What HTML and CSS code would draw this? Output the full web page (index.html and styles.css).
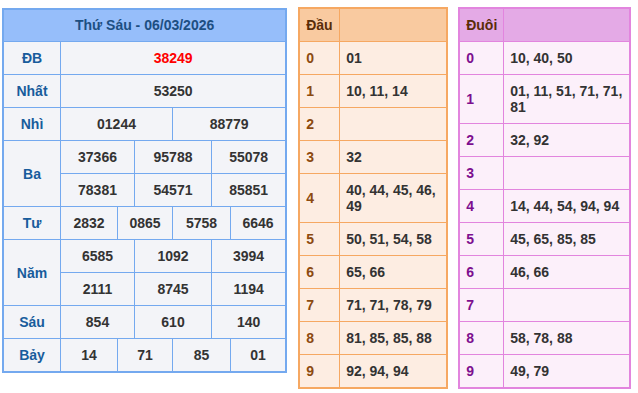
FILE: index.html
```html
<!DOCTYPE html>
<html lang="vi">
<head>
<meta charset="utf-8">
<title>Kết quả xổ số</title>
<link rel="stylesheet" href="styles.css">
</head>
<body>
<div class="wrap">
  <table class="kq">
    <colgroup>
      <col class="c-label">
      <col class="w19"><col class="w19"><col class="w19"><col class="w17">
      <col class="w19"><col class="w19"><col class="w19"><col class="w20">
      <col class="w19"><col class="w18"><col class="w18"><col class="w18">
    </colgroup>
    <thead>
      <tr><th colspan="13" class="title">Thứ Sáu - 06/03/2026</th></tr>
    </thead>
    <tbody>
      <tr><td class="lbl">ĐB</td><td colspan="12" class="db">38249</td></tr>
      <tr><td class="lbl">Nhất</td><td colspan="12">53250</td></tr>
      <tr><td class="lbl">Nhì</td><td colspan="6">01244</td><td colspan="6">88779</td></tr>
      <tr><td class="lbl" rowspan="2">Ba</td><td colspan="4">37366</td><td colspan="4">95788</td><td colspan="4">55078</td></tr>
      <tr><td colspan="4">78381</td><td colspan="4">54571</td><td colspan="4">85851</td></tr>
      <tr><td class="lbl">Tư</td><td colspan="3">2832</td><td colspan="3">0865</td><td colspan="3">5758</td><td colspan="3">6646</td></tr>
      <tr><td class="lbl" rowspan="2">Năm</td><td colspan="4">6585</td><td colspan="4">1092</td><td colspan="4">3994</td></tr>
      <tr><td colspan="4">2111</td><td colspan="4">8745</td><td colspan="4">1194</td></tr>
      <tr><td class="lbl">Sáu</td><td colspan="4">854</td><td colspan="4">610</td><td colspan="4">140</td></tr>
      <tr class="last"><td class="lbl">Bảy</td><td colspan="3">14</td><td colspan="3">71</td><td colspan="3">85</td><td colspan="3">01</td></tr>
    </tbody>
  </table>

  <table class="lt dau">
    <colgroup><col class="c-k1"><col></colgroup>
    <thead><tr><th>Đầu</th><th></th></tr></thead>
    <tbody>
      <tr><td class="k">0</td><td>01</td></tr>
      <tr><td class="k">1</td><td>10, 11, 14</td></tr>
      <tr><td class="k">2</td><td></td></tr>
      <tr><td class="k">3</td><td>32</td></tr>
      <tr><td class="k">4</td><td>40, 44, 45, 46, 49</td></tr>
      <tr><td class="k">5</td><td>50, 51, 54, 58</td></tr>
      <tr><td class="k">6</td><td>65, 66</td></tr>
      <tr><td class="k">7</td><td>71, 71, 78, 79</td></tr>
      <tr><td class="k">8</td><td>81, 85, 85, 88</td></tr>
      <tr class="last"><td class="k">9</td><td>92, 94, 94</td></tr>
    </tbody>
  </table>

  <table class="lt duoi">
    <colgroup><col class="c-k2"><col></colgroup>
    <thead><tr><th>Đuôi</th><th></th></tr></thead>
    <tbody>
      <tr><td class="k">0</td><td>10, 40, 50</td></tr>
      <tr><td class="k">1</td><td>01, 11, 51, 71, 71, 81</td></tr>
      <tr><td class="k">2</td><td>32, 92</td></tr>
      <tr><td class="k">3</td><td></td></tr>
      <tr><td class="k">4</td><td>14, 44, 54, 94, 94</td></tr>
      <tr><td class="k">5</td><td>45, 65, 85, 85</td></tr>
      <tr><td class="k">6</td><td>46, 66</td></tr>
      <tr><td class="k">7</td><td></td></tr>
      <tr><td class="k">8</td><td>58, 78, 88</td></tr>
      <tr class="last"><td class="k">9</td><td>49, 79</td></tr>
    </tbody>
  </table>
</div>
</body>
</html>
```

FILE: styles.css
```css
html, body {
  margin: 0;
  padding: 0;
  background: #ffffff;
}
body {
  font-family: "Liberation Sans", Arial, sans-serif;
  font-size: 14px;
  font-weight: bold;
  color: #333333;
}
.wrap {
  display: flex;
  align-items: flex-start;
  padding: 7px 0 0 2px;
}
table {
  border-spacing: 0;
  table-layout: fixed;
}
th, td {
  line-height: 16px;
  padding: 8px 6px;
  border-right: 1px solid;
  border-bottom: 1px solid;
  border-color: inherit;
  font-weight: bold;
  overflow: hidden;
}
th:last-child, td:last-child { border-right: none; }
tr.last td { border-bottom: none; }

/* main results table */
.kq {
  width: 285px;
  margin-top: 1px;
  border: 2px solid #74a9ef;
  background: #f3f4f8;
}
.kq .c-label { width: 57px; }
.kq .w17 { width: 17px; }
.kq .w18 { width: 18px; }
.kq .w19 { width: 19px; }
.kq .w20 { width: 20px; }
.kq th, .kq td {
  text-align: center;
  padding: 8px 0;
  border-color: #74a9ef;
}
.kq .title {
  background: #96befa;
  color: #1d4f82;
  padding: 7px 0 8px;
  border-right: none;
}
.kq .lbl { color: #185c9c; }
.kq tr td[rowspan="2"] { border-bottom: 1px solid #74a9ef; }
.kq tr.last td { border-right: 1px solid #74a9ef; }
.kq tr.last td:last-child { border-right: none; }
.kq td:last-child { border-right: none; }
.kq .db { color: #ff0000; }

/* loto tables */
.lt { border: 2px solid; }
.lt th, .lt td { text-align: left; }
.lt th { color: #5a2c08; }

.dau {
  width: 150px;
  margin-left: 11px;
  border-color: #f6a862;
  background: #fdede2;
}
.dau th, .dau td { border-color: #f6a862; }
.dau th { background: #f9caa0; }
.dau .c-k1 { width: 40px; }
.dau .k { color: #8c4a10; }

.duoi {
  width: 173px;
  margin-left: 10px;
  border-color: #e285de;
  background: #fcf0fa;
}
.duoi th, .duoi td { border-color: #e285de; }
.duoi th { background: #e4aae6; }
.duoi .c-k2 { width: 44px; }
.duoi .k { color: #7d0f8f; }
```
